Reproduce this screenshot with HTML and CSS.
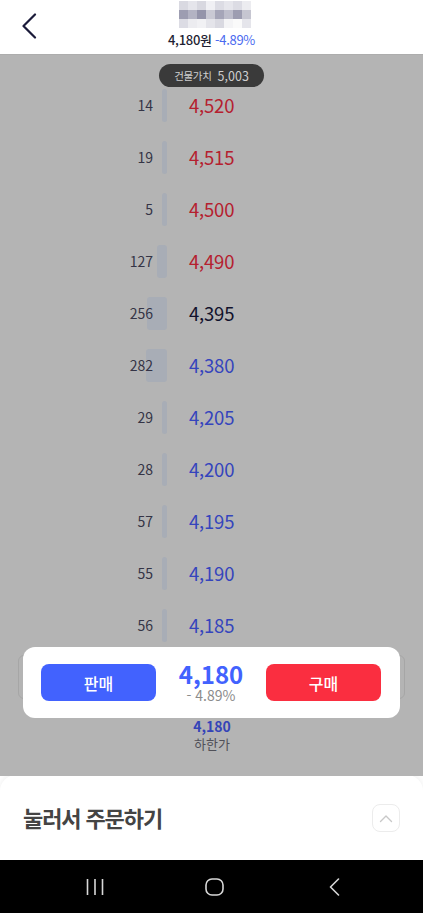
FILE: index.html
```html
<!DOCTYPE html>
<html lang="ko">
<head>
<meta charset="utf-8">
<link rel="stylesheet" href="styles.css">
</head>
<body>
<div class="app">
  <header class="top">
    <div class="back">
      <svg width="16" height="26" viewBox="0 0 16 26"><path d="M14 1.5 L2.5 13 L14 24.5" fill="none" stroke="#1b1b3a" stroke-width="2.2" stroke-linecap="round" stroke-linejoin="round"/></svg>
    </div>
    <div class="title">
      <div class="mosaic">
        <i></i><i></i><i></i><i></i><i></i><i></i><i></i><i></i>
        <i></i><i></i><i></i><i></i><i></i><i></i><i></i><i></i>
        <i></i><i></i><i></i><i></i><i></i><i></i><i></i><i></i>
      </div>
      <div class="sub"><span class="subp">4,180원</span> <span class="subr">-4.89%</span></div>
    </div>
    <div class="side"></div>
  </header>

  <main class="book">
    <div class="badge"><span class="bl">건물가치</span><span class="bv">5,003</span></div>
    <div class="rows">
      <div class="row"><div class="qty"><span class="bar" style="width:5px"></span><span class="qn">14</span></div><div class="price up">4,520</div></div>
      <div class="row"><div class="qty"><span class="bar" style="width:5px"></span><span class="qn">19</span></div><div class="price up">4,515</div></div>
      <div class="row"><div class="qty"><span class="bar" style="width:5px"></span><span class="qn">5</span></div><div class="price up">4,500</div></div>
      <div class="row"><div class="qty"><span class="bar" style="width:10px"></span><span class="qn">127</span></div><div class="price up">4,490</div></div>
      <div class="row"><div class="qty"><span class="bar" style="width:20px"></span><span class="qn">256</span></div><div class="price flat">4,395</div></div>
      <div class="row"><div class="qty"><span class="bar" style="width:21px"></span><span class="qn">282</span></div><div class="price down">4,380</div></div>
      <div class="row"><div class="qty"><span class="bar" style="width:5px"></span><span class="qn">29</span></div><div class="price down">4,205</div></div>
      <div class="row"><div class="qty"><span class="bar" style="width:5px"></span><span class="qn">28</span></div><div class="price down">4,200</div></div>
      <div class="row"><div class="qty"><span class="bar" style="width:5px"></span><span class="qn">57</span></div><div class="price down">4,195</div></div>
      <div class="row"><div class="qty"><span class="bar" style="width:5px"></span><span class="qn">55</span></div><div class="price down">4,190</div></div>
      <div class="row"><div class="qty"><span class="bar" style="width:5px"></span><span class="qn">56</span></div><div class="price down">4,185</div></div>
    </div>
    <div class="limit">
      <div class="lv">4,180</div>
      <div class="ll">하한가</div>
    </div>
    <div class="ghost"></div>
    <div class="panel">
      <button class="btn sell">판매</button>
      <div class="cur">
        <div class="cv">4,180</div>
        <div class="cr">- 4.89%</div>
      </div>
      <button class="btn buy">구매</button>
    </div>
  </main>

  <section class="sheet">
    <h2 class="sheet-title">눌러서 주문하기</h2>
    <div class="up-btn">
      <svg width="14" height="9" viewBox="0 0 14 9"><path d="M1.5 7.5 L7 2 L12.5 7.5" fill="none" stroke="#c8c8c8" stroke-width="1.4" stroke-linecap="round" stroke-linejoin="round"/></svg>
    </div>
  </section>

  <nav class="nav">
    <svg class="n1" width="18" height="18" viewBox="0 0 18 18"><path d="M1.5 1 V17 M9 1 V17 M16.5 1 V17" stroke="#d8d8d8" stroke-width="1.6"/></svg>
    <svg class="n2" width="19" height="18" viewBox="0 0 19 18"><rect x="1" y="1" width="17" height="16" rx="6" fill="none" stroke="#d8d8d8" stroke-width="1.6"/></svg>
    <svg class="n3" width="11" height="18" viewBox="0 0 11 18"><path d="M9.5 1 L1.5 9 L9.5 17" fill="none" stroke="#d8d8d8" stroke-width="1.6" stroke-linecap="round" stroke-linejoin="round"/></svg>
  </nav>
</div>
</body>
</html>
```

FILE: styles.css
```css
* { box-sizing: border-box; }
html, body { margin: 0; padding: 0; }
body {
  font-family: "Noto Sans CJK KR", "Noto Sans", sans-serif;
  background: #ffffff;
}
.app {
  width: 423px;
  height: 913px;
  display: flex;
  flex-direction: column;
  overflow: hidden;
}

/* header */
.top {
  height: 54px;
  flex: none;
  display: grid;
  grid-template-columns: 60px 1fr 60px;
  background: #fff;
}
.back {
  padding: 13px 0 0 21px;
}
.title {
  display: flex;
  flex-direction: column;
  align-items: center;
  padding-top: 1px;
}
.mosaic {
  display: grid;
  grid-template-columns: repeat(8, 9px);
  grid-template-rows: repeat(3, 9px);
  margin-left: 6px;
}
.mosaic i { display: block; }
.mosaic i:nth-child(1) { background: #d9d9e1; }
.mosaic i:nth-child(2) { background: #e5e5eb; }
.mosaic i:nth-child(3) { background: #d8d8e0; }
.mosaic i:nth-child(4) { background: #f0f0f4; }
.mosaic i:nth-child(5) { background: #dcdce4; }
.mosaic i:nth-child(6) { background: #e6e6ec; }
.mosaic i:nth-child(7) { background: #dcdce4; }
.mosaic i:nth-child(8) { background: #ececf0; }
.mosaic i:nth-child(9) { background: #9d9db1; }
.mosaic i:nth-child(10) { background: #b3b3c3; }
.mosaic i:nth-child(11) { background: #9494aa; }
.mosaic i:nth-child(12) { background: #c9c9d4; }
.mosaic i:nth-child(13) { background: #a5a5b8; }
.mosaic i:nth-child(14) { background: #bdbdcb; }
.mosaic i:nth-child(15) { background: #9d9db1; }
.mosaic i:nth-child(16) { background: #c6c6d1; }
.mosaic i:nth-child(17) { background: #dcdce4; }
.mosaic i:nth-child(18) { background: #ececf0; }
.mosaic i:nth-child(19) { background: #f1f1f4; }
.mosaic i:nth-child(20) { background: #e4e4ea; }
.mosaic i:nth-child(21) { background: #d9d9e1; }
.mosaic i:nth-child(22) { background: #f4f4f6; }
.mosaic i:nth-child(23) { background: #fafafa; }
.mosaic i:nth-child(24) { background: #e5e5eb; }
.sub {
  margin-top: 3px;
  font-size: 13px;
  line-height: 17px;
  font-weight: 500;
  letter-spacing: -0.3px;
  white-space: nowrap;
}
.subp { color: #1f1f33; }
.subr { color: #4a6af0; font-weight: 400; }

/* order book */
.book {
  flex: 1;
  position: relative;
  background: #b4b4b4;
  padding-top: 24px;
  border-top: 1px solid #adadad;
}
.badge {
  position: absolute;
  top: 9px;
  left: 159px;
  width: 105px;
  height: 23px;
  border-radius: 12px;
  background: #3a3a3a;
  color: #cfcfcf;
  display: flex;
  align-items: center;
  justify-content: center;
  gap: 6px;
}
.bl { font-size: 10.5px; letter-spacing: -0.3px; }
.bv { font-size: 12.5px; }
.rows { display: flex; flex-direction: column; }
.row {
  height: 52px;
  display: flex;
  align-items: center;
}
.qty {
  position: relative;
  width: 167px;
  height: 100%;
  display: flex;
  align-items: center;
  justify-content: flex-end;
  padding-right: 14px;
}
.bar {
  position: absolute;
  right: 0;
  top: 10px;
  height: 33px;
  border-radius: 3px;
  background: #a8adb6;
}
.qn {
  position: relative;
  font-size: 14px;
  color: #343446;
}
.price {
  margin-left: 22px;
  font-size: 18.5px;
  letter-spacing: -0.2px;
}
.up { color: #b5202f; }
.down { color: #3444bd; }
.flat { color: #11112c; }

.limit {
  margin-top: 68px;
  display: flex;
  flex-direction: column;
  align-items: center;
  padding-left: 1px;
}
.lv {
  font-size: 14px;
  font-weight: 700;
  color: #3444b8;
  line-height: 15px;
}
.ll {
  font-size: 13px;
  color: #505058;
  line-height: 17px;
  margin-top: 1px;
}

.ghost {
  position: absolute;
  top: 600px;
  left: 18px;
  width: 387px;
  height: 44px;
  border: 1px solid #a6a6a6;
  border-radius: 6px;
}
.panel {
  position: absolute;
  top: 592px;
  left: 23px;
  width: 377px;
  height: 71px;
  background: #fff;
  border-radius: 12px;
  display: flex;
  align-items: center;
  padding: 0 19px 0 18px;
}
.btn {
  width: 115px;
  height: 37px;
  border: none;
  border-radius: 8px;
  color: #fff;
  font-family: inherit;
  font-size: 16px;
  font-weight: 500;
  padding: 0;
}
.sell { background: #4262fe; }
.buy { background: #fa2e40; }
.cur {
  flex: 1;
  display: flex;
  flex-direction: column;
  align-items: center;
  padding-top: 1px;
}
.cv {
  font-size: 24px;
  font-weight: 700;
  color: #4262fe;
  line-height: 22px;
}
.cr {
  font-size: 14px;
  color: #8c8c8c;
  line-height: 16px;
  margin-top: 2px;
}

/* bottom sheet */
.sheet {
  height: 85px;
  flex: none;
  background: #fff;
  border-radius: 16px 16px 0 0;
  margin-top: -1px;
  display: flex;
  align-items: center;
  justify-content: space-between;
  padding: 0 23px 0 23px;
  box-shadow: 0 -2px 6px rgba(0,0,0,0.06);
}
.sheet-title {
  margin: 0 0 2px 0;
  font-size: 22px;
  font-weight: 700;
  color: #444;
  letter-spacing: -1.1px;
}
.up-btn {
  width: 28px;
  height: 28px;
  border: 1px solid #ececec;
  border-radius: 8px;
  display: flex;
  align-items: center;
  justify-content: center;
  margin-top: 1px;
}

/* nav bar */
.nav {
  height: 53px;
  flex: none;
  background: #000;
  display: flex;
  align-items: center;
  padding-left: 86px;
}
.n2 { margin-left: 101px; }
.n3 { margin-left: 105px; }
```
